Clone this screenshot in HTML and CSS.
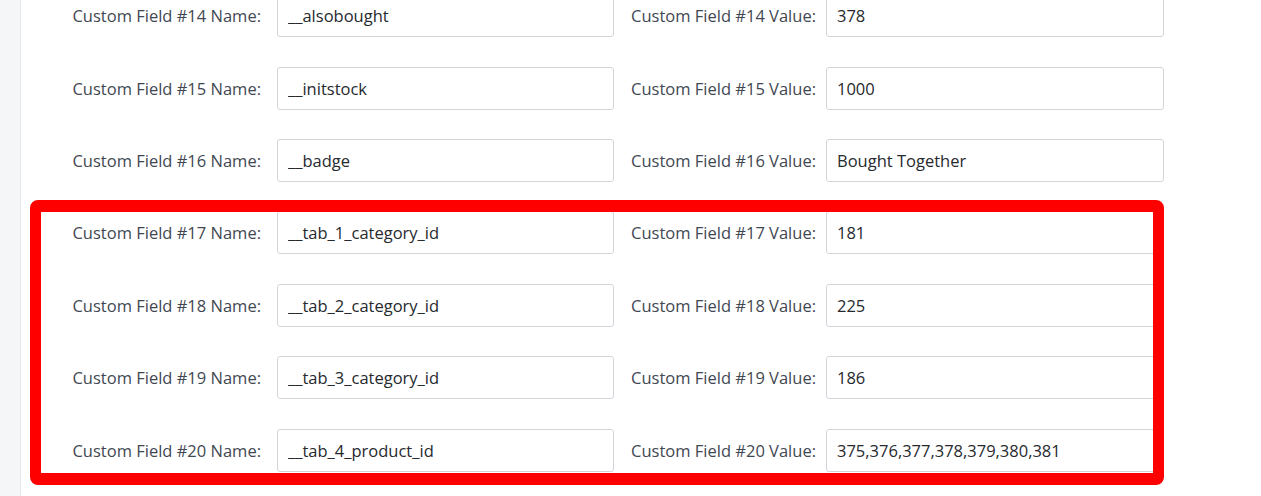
FILE: index.html
```html
<!DOCTYPE html>
<html lang="en">
<head>
<meta charset="utf-8">
<title>Custom Fields</title>
<link rel="stylesheet" href="styles.css">
</head>
<body>
<div class="layout">
  <aside class="sidebar"></aside>
  <main class="content">
    <div class="form">
      <div class="row"><label class="lbl">Custom Field #14 Name:</label><input class="field" value="__alsobought"><label class="lbl lbl-v">Custom Field #14 Value:</label><input class="field" value="378"></div>
      <div class="row"><label class="lbl">Custom Field #15 Name:</label><input class="field" value="__initstock"><label class="lbl lbl-v">Custom Field #15 Value:</label><input class="field" value="1000"></div>
      <div class="row"><label class="lbl">Custom Field #16 Name:</label><input class="field" value="__badge"><label class="lbl lbl-v">Custom Field #16 Value:</label><input class="field" value="Bought Together"></div>
      <div class="row"><label class="lbl">Custom Field #17 Name:</label><input class="field" value="__tab_1_category_id"><label class="lbl lbl-v">Custom Field #17 Value:</label><input class="field" value="181"></div>
      <div class="row"><label class="lbl">Custom Field #18 Name:</label><input class="field" value="__tab_2_category_id"><label class="lbl lbl-v">Custom Field #18 Value:</label><input class="field" value="225"></div>
      <div class="row"><label class="lbl">Custom Field #19 Name:</label><input class="field" value="__tab_3_category_id"><label class="lbl lbl-v">Custom Field #19 Value:</label><input class="field" value="186"></div>
      <div class="row"><label class="lbl">Custom Field #20 Name:</label><input class="field" value="__tab_4_product_id"><label class="lbl lbl-v">Custom Field #20 Value:</label><input class="field" value="375,376,377,378,379,380,381"></div>
    </div>
    <div class="highlight"></div>
  </main>
</div>
</body>
</html>
```
FILE: styles.css
```css
html, body {
  margin: 0;
  padding: 0;
  background: #ffffff;
  height: 100%;
  overflow: hidden;
}
body {
  font-family: "Open Sans", "Liberation Sans", sans-serif;
  color: #434c56;
}
.layout {
  display: flex;
  height: 496px;
}
.sidebar {
  width: 20px;
  flex: 0 0 20px;
  background: #f4f6f8;
  border-right: 1px solid #e5e8eb;
}
.content {
  position: relative;
  flex: 1;
}
.form {
  margin-top: -20.5px;
  display: flex;
  flex-direction: column;
}
.row {
  display: grid;
  grid-template-columns: 256px 337px 212px 338px;
  align-items: center;
  height: 72.4px;
}
.lbl {
  text-align: right;
  padding-right: 16px;
  font-size: 16.5px;
  color: #3f4852;
  white-space: nowrap;
  line-height: 43px;
}
.lbl-v {
  padding-right: 10px;
}
.field {
  box-sizing: border-box;
  height: 43px;
  width: 100%;
  margin: 0;
  padding: 0 10px;
  border: 1px solid #d2d6db;
  border-radius: 3px;
  background: #fff;
  font-family: "Open Sans", "Liberation Sans", sans-serif;
  font-size: 16.5px;
  color: #26292d;
  outline: none;
}
.highlight {
  position: absolute;
  left: 9px;
  top: 200px;
  width: 1134px;
  height: 285px;
  box-sizing: border-box;
  border-style: solid;
  border-color: #ff0000;
  border-width: 12px 11px;
  border-radius: 8px;
  pointer-events: none;
}
```
